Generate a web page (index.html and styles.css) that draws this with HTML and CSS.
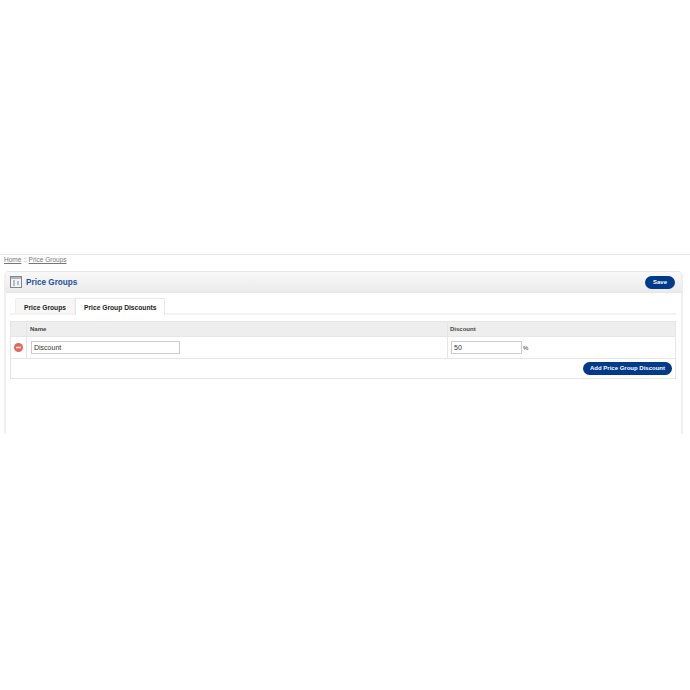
FILE: index.html
```html
<!DOCTYPE html>
<html lang="en">
<head>
  <meta charset="UTF-8"/>
  <title>Price Groups</title>
  <link rel="stylesheet" href="styles.css">
</head>
<body>
<div class="top"></div>
<div class="breadcrumb"><a href="#">Home</a> :: <a href="#">Price Groups</a></div>

<div class="box">
  <div class="box-head">
    <svg class="box-icon" width="12" height="12" viewBox="0 0 12 12">
      <rect x="0.5" y="0.5" width="11" height="11" fill="#f4f4f4" stroke="#858585"/>
      <rect x="1" y="1" width="10" height="2" fill="#b5b5b5"/>
      <path d="M3 5h2M3 7h2M3 9h2M7 6h2M7 8h2" stroke="#5d8fc0" fill="none"/>
    </svg>
    <h1>Price Groups</h1>
    <a href="#" class="btn btn-save">Save</a>
  </div>

  <div class="box-body">
    <div class="tabs">
      <a href="#" class="tab">Price Groups</a>
      <a href="#" class="tab active">Price Group Discounts</a>
    </div>

    <table class="list">
      <thead>
        <tr>
          <th class="col-icon"></th>
          <th class="col-name">Name</th>
          <th class="col-discount">Discount</th>
        </tr>
      </thead>
      <tbody>
        <tr>
          <td class="col-icon">
            <svg width="9" height="9" viewBox="0 0 9 9">
              <circle cx="4.5" cy="4.5" r="4.5" fill="#e2675f"/>
              <rect x="2" y="3.7" width="5" height="1.6" fill="#fbe4e2"/>
            </svg>
          </td>
          <td class="cell-name"><input class="input-name" type="text" value="Discount"></td>
          <td><input class="input-discount" type="text" value="50"><span class="pct">%</span></td>
        </tr>
      </tbody>
      <tfoot>
        <tr>
          <td colspan="3"><a href="#" class="btn btn-add">Add Price Group Discount</a></td>
        </tr>
      </tfoot>
    </table>
  </div>
</div>
</body>
</html>
```

FILE: styles.css
```css
body {
  margin: 0;
  background: #fff;
  font-family: "Liberation Sans", Arial, sans-serif;
  font-size: 6px;
  color: #333;
}

.top {
  height: 254px;
  border-bottom: 1px solid #e8e8e8;
}

.breadcrumb {
  height: 16px;
  padding: 0 0 0 4px;
  box-sizing: border-box;
  font-size: 6.5px;
  line-height: 10px;
  color: #999;
}

.breadcrumb a {
  color: #777;
}

.box {
  margin-left: 4px;
  width: 679px;
  height: 163px;
  box-sizing: border-box;
  border: 2px solid #efefef;
  border-top: 1px solid #e6e6e6;
  border-bottom: none;
  border-radius: 5px 5px 0 0;
}

.box-head {
  height: 20px;
  display: flex;
  align-items: center;
  padding: 0 6px 0 4px;
  background: linear-gradient(#f8f8f8, #ebebeb);
  border-bottom: 1px solid #e6e6e6;
  border-radius: 4px 4px 0 0;
}

.box-icon {
  margin-right: 4px;
}

h1 {
  margin: 0;
  flex: 1;
  font-size: 8.2px;
  color: #1f4f96;
}

.btn {
  display: block;
  color: #fff;
  background: #003a88;
  font-weight: bold;
  text-decoration: none;
  text-align: center;
  border-radius: 7px;
  line-height: 13px;
  height: 13px;
}

.btn-save {
  width: 30px;
}

.btn-add {
  width: 89px;
  margin-left: auto;
}

.box-body {
  padding: 5px 0 0 4px;
}

.tabs {
  display: flex;
  width: 661px;
  padding-left: 5px;
  height: 15px;
  border-bottom: 2px solid #f3f3f3;
}

.tab {
  height: 15px;
  line-height: 17px;
  padding: 0 8px;
  font-weight: bold;
  font-size: 6.7px;
  color: #222;
  text-decoration: none;
  background: #f7f7f7;
  border: 1px solid #f0f0f0;
  border-bottom: none;
  box-sizing: border-box;
}

.tab.active {
  background: #fff;
  height: 17px;
  border-color: #e8e8e8;
}

.list {
  width: 666px;
  margin-top: 6px;
  border-collapse: collapse;
  table-layout: fixed;
}

.list th,
.list td {
  border: 1px solid #e6e6e6;
  padding: 0 3px;
}

.list th {
  height: 14px;
  text-align: left;
  background: #eee;
  color: #444;
}

.list .col-discount {
  padding-left: 2px;
}

.list tbody td {
  height: 21px;
}

.list tbody .cell-name {
  padding-left: 4px;
}

.list tfoot td {
  height: 19px;
  padding-right: 3px;
}

.list .col-icon {
  width: 9px;
  text-align: center;
}

.list .col-name {
  width: 414px;
}

.list svg {
  display: block;
  margin: 0 auto;
}

input {
  font-family: inherit;
  font-size: 7px;
  color: #333;
  height: 13px;
  box-sizing: border-box;
  border: 1px solid #ccc;
  padding: 0 2px;
  vertical-align: middle;
  outline: none;
}

.input-name {
  width: 149px;
}

.input-discount {
  width: 71px;
}

.pct {
  margin-left: 1px;
  vertical-align: middle;
}
```
